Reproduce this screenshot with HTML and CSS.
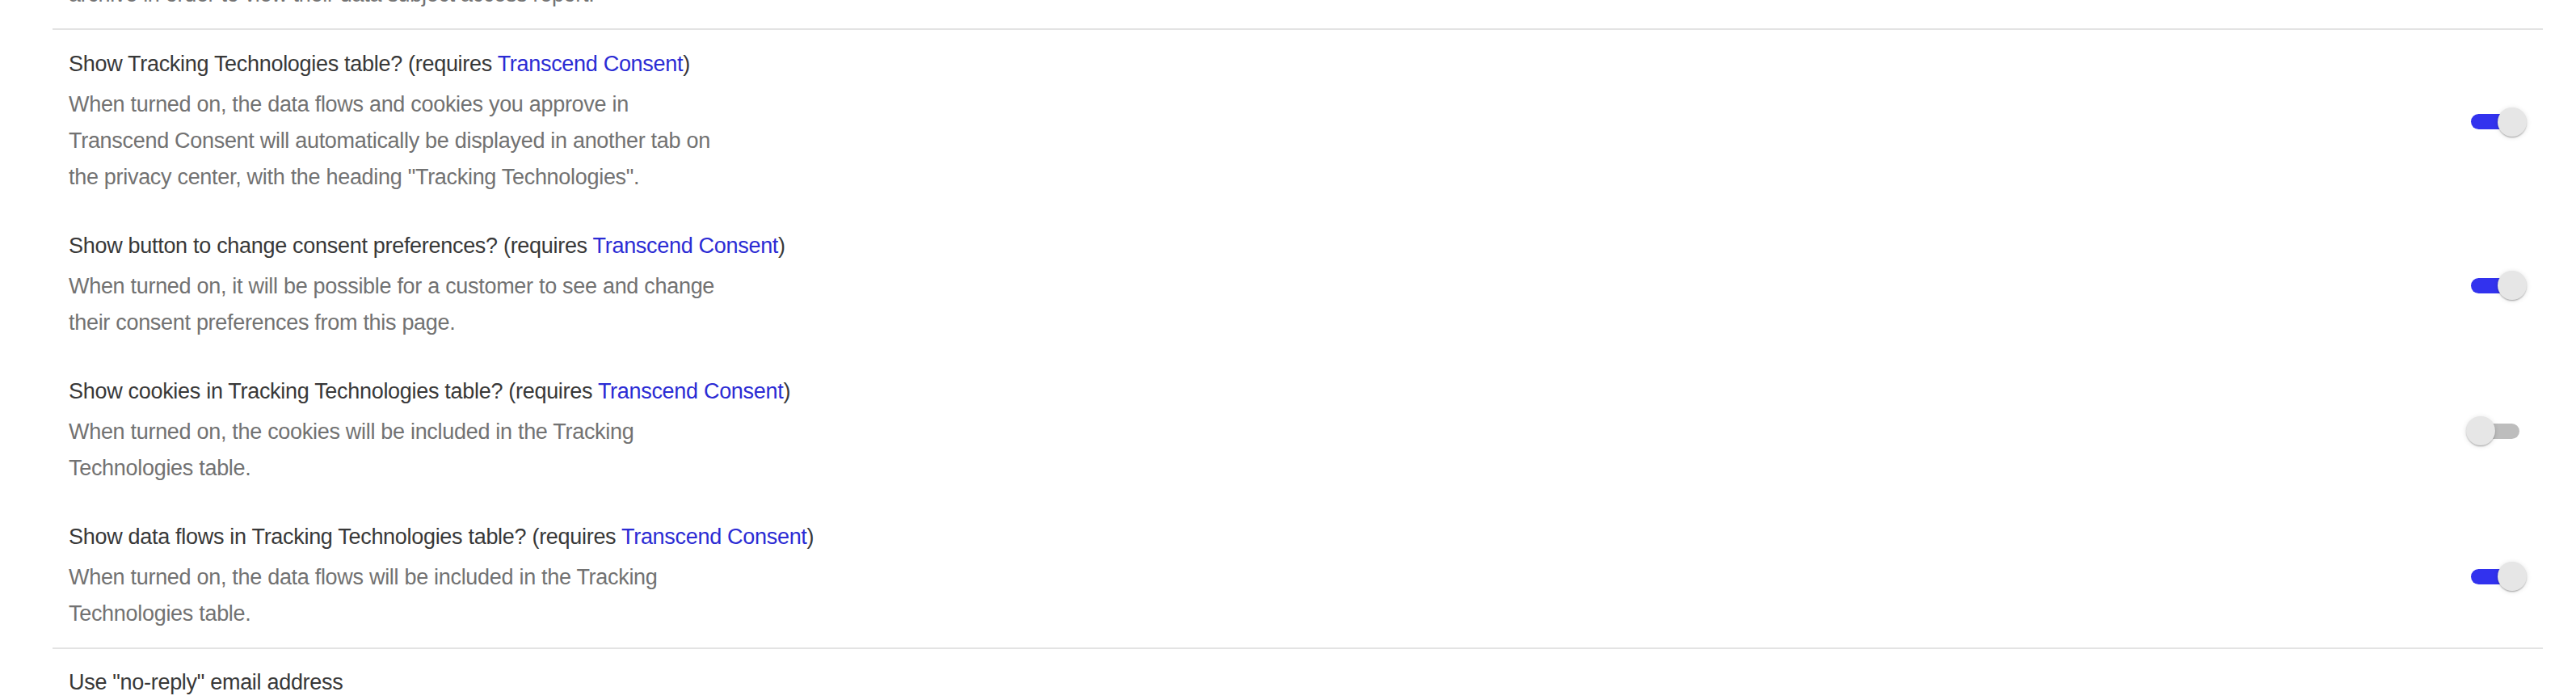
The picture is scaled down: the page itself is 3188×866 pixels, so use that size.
FILE: index.html
```html
<!DOCTYPE html>
<html lang="en">
<head>
<meta charset="utf-8">
<title>Privacy Center settings</title>
<link rel="stylesheet" href="styles.css">
</head>
<body>
<div class="settings">
  <section class="group group--clipped">
    <p class="desc">archive in order to view their data subject access report.</p>
  </section>

  <section class="group group--list">
    <div class="row">
      <div class="text">
        <div class="title">Show Tracking Technologies table? (requires <a class="link" href="#">Transcend Consent</a>)</div>
        <p class="desc">When turned on, the data flows and cookies you approve in Transcend Consent will automatically be displayed in another tab on the privacy center, with the heading "Tracking Technologies".</p>
      </div>
      <span class="switch switch--on"><span class="track"></span><span class="thumb"></span></span>
    </div>
    <div class="row">
      <div class="text">
        <div class="title">Show button to change consent preferences? (requires <a class="link" href="#">Transcend Consent</a>)</div>
        <p class="desc">When turned on, it will be possible for a customer to see and change their consent preferences from this page.</p>
      </div>
      <span class="switch switch--on"><span class="track"></span><span class="thumb"></span></span>
    </div>
    <div class="row">
      <div class="text">
        <div class="title">Show cookies in Tracking Technologies table? (requires <a class="link" href="#">Transcend Consent</a>)</div>
        <p class="desc">When turned on, the cookies will be included in the Tracking Technologies table.</p>
      </div>
      <span class="switch"><span class="track"></span><span class="thumb"></span></span>
    </div>
    <div class="row">
      <div class="text">
        <div class="title">Show data flows in Tracking Technologies table? (requires <a class="link" href="#">Transcend Consent</a>)</div>
        <p class="desc">When turned on, the data flows will be included in the Tracking Technologies table.</p>
      </div>
      <span class="switch switch--on"><span class="track"></span><span class="thumb"></span></span>
    </div>
  </section>

  <section class="group group--last">
    <div class="title">Use "no-reply" email address</div>
  </section>
</div>
</body>
</html>
```
FILE: styles.css
```css
html, body {
  margin: 0;
  padding: 0;
  background: #ffffff;
}

body {
  font-family: "Liberation Sans", Arial, sans-serif;
  font-size: 27px;
  overflow: hidden;
}

.settings {
  margin: -29px 41px 0 65px;
}

.group {
  padding: 22px 20px 19px;
  border-top: 2px solid #e3e3e3;
}

.group--clipped {
  border-top: none;
  padding-top: 0;
}

.group--list {
  display: flex;
  flex-direction: column;
  gap: 42px;
}

.group--last {
  padding-top: 21px;
}

.row {
  display: flex;
  align-items: center;
  justify-content: space-between;
}

.text {
  display: flex;
  flex-direction: column;
  gap: 8px;
}

.title {
  color: #383838;
  line-height: 40px;
  letter-spacing: -0.3px;
}

.link {
  color: #2b2bd4;
  text-decoration: none;
}

.desc {
  margin: 0;
  color: #727272;
  line-height: 45px;
  letter-spacing: -0.3px;
  max-width: 800px;
}

.switch {
  position: relative;
  display: flex;
  align-items: center;
  width: 75px;
  height: 36px;
  flex-shrink: 0;
}

.track {
  display: block;
  margin-left: 6px;
  width: 60px;
  height: 19px;
  border-radius: 10px;
  background: #bdbdbd;
}

.switch--on .track {
  background: #3232ee;
}

.thumb {
  position: absolute;
  top: 0;
  left: 0;
  width: 36px;
  height: 36px;
  border-radius: 50%;
  background: #e6e6e6;
  box-shadow: 0 2px 2px -1px rgba(0, 0, 0, 0.2), 0 1px 2px 0 rgba(0, 0, 0, 0.14), 0 1px 6px 0 rgba(0, 0, 0, 0.12);
}

.switch--on .thumb {
  left: 39px;
}
```
